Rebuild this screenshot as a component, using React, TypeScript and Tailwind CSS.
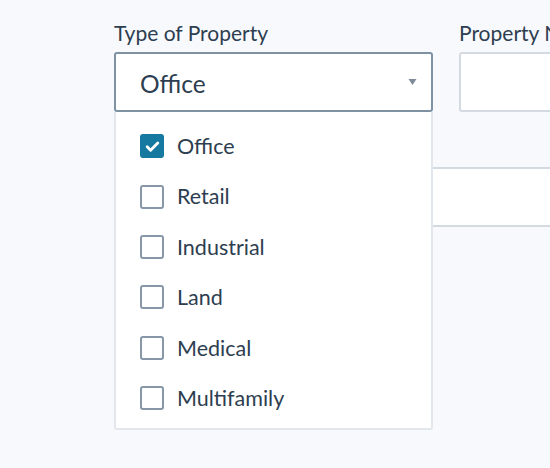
import { useState } from "react";

const options = ["Office", "Retail", "Industrial", "Land", "Medical", "Multifamily"];

function CheckIcon() {
    return (
        <svg viewBox="0 0 24 24" className="h-[17px] w-[17px]" fill="none" stroke="white" strokeWidth="4" strokeLinecap="round" strokeLinejoin="round">
            <path d="M4.5 12.5l4.8 4.8L19.5 7" />
        </svg>
    );
}

export default function App() {
    const [selected, setSelected] = useState<string[]>(["Office"]);

    function toggle(opt: string) {
        setSelected((s) => (s.includes(opt) ? s.filter((x) => x !== opt) : [...s, opt]));
    }

    return (
        <div className="h-[468px] w-[550px] overflow-hidden bg-[#f8f9fc] pl-[114px] pt-[19px] font-['Lato','Noto_Sans',sans-serif] text-[#2d3e50]">
            <div className="flex w-[700px] gap-[26px]">
                <div className="relative w-[319px]">
                    <div className="mb-[5px] text-[21px] leading-[28px]">Type of Property</div>
                    <div className="flex h-[60px] items-center justify-between rounded-[3px] border-2 border-[#7f92a4] bg-white pl-[24px] pr-[14px]">
                        <span className="pt-[5px] text-[24.5px]">{selected[0] ?? ""}</span>
                        <svg viewBox="0 0 8 6" className="h-[6px] w-[9px]" fill="#7d8b99">
                            <path d="M0 0h8L4 6z" />
                        </svg>
                    </div>
                    <div className="absolute left-0 top-full z-10 h-[318px] w-[319px] rounded-b-[3px] border-2 border-t-0 border-[#e2e7ee] bg-white pt-[9px]">
                        {options.map((opt) => {
                            const on = selected.includes(opt);
                            return (
                                <label key={opt} className="flex h-[50.4px] cursor-pointer items-center pl-[24px]">
                                    <span
                                        onClick={() => toggle(opt)}
                                        className={
                                            on
                                                ? "flex h-[24px] w-[24px] items-center justify-center rounded-[3px] bg-[#16799f]"
                                                : "flex h-[24px] w-[24px] items-center justify-center rounded-[3px] border-2 border-[#8797a8] bg-white"
                                        }
                                    >
                                        {on && <CheckIcon />}
                                    </span>
                                    <span className="ml-[13px] text-[21.5px]">{opt}</span>
                                </label>
                            );
                        })}
                    </div>
                </div>
                <div className="w-[319px]">
                    <div className="mb-[5px] text-[21px] leading-[28px]">Property Name</div>
                    <input className="h-[60px] w-full rounded-[3px] border-2 border-[#d3dae2] bg-white" />
                </div>
            </div>
            <div className="mt-[55px] h-[60px] w-[664px] rounded-[3px] border-2 border-[#d3dae2] bg-white" />
        </div>
    );
}
